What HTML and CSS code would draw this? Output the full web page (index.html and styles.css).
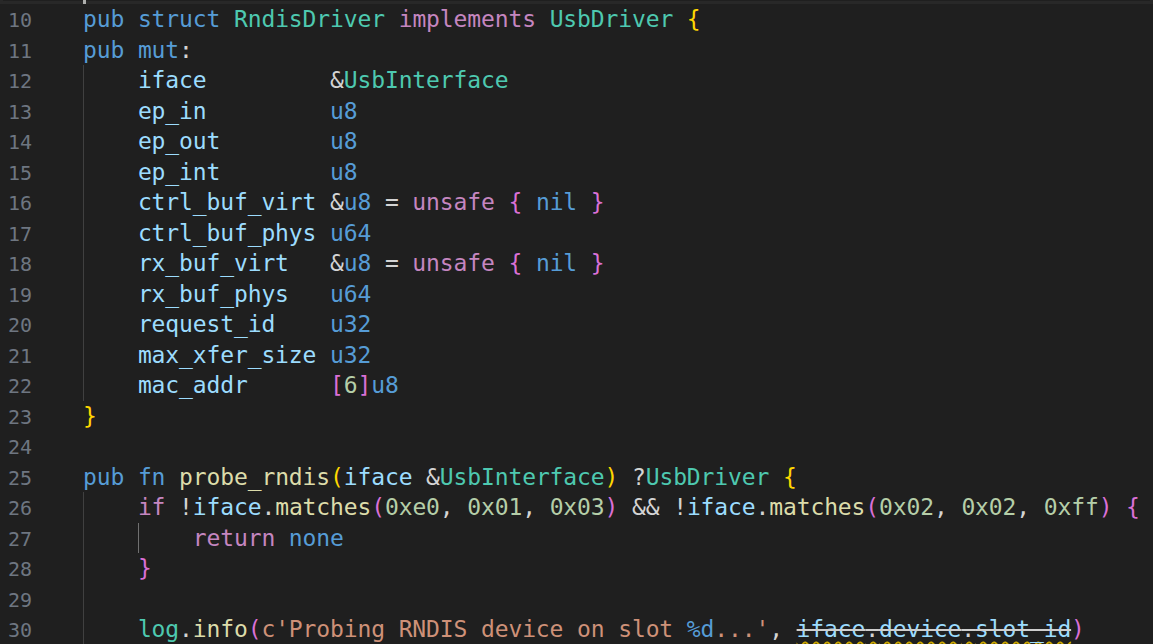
FILE: index.html
```html
<!DOCTYPE html>
<html lang="en">
<head>
<meta charset="utf-8">
<title>RNDIS driver</title>
<link rel="stylesheet" href="styles.css">
</head>
<body>
<div class="editor">
  <div class="line current"><span class="ln"></span><span class="code"><span class="cursor"></span></span></div>
  <div class="line"><span class="ln">10</span><span class="code"><span class="k">pub struct</span> <span class="t">RndisDriver</span> <span class="c">implements</span> <span class="t">UsbDriver</span> <span class="b1">{</span></span></div>
  <div class="line"><span class="ln">11</span><span class="code"><span class="k">pub mut</span>:</span></div>
  <div class="line"><span class="ln">12</span><span class="code g0">    <span class="v">iface</span>         &amp;<span class="t">UsbInterface</span></span></div>
  <div class="line"><span class="ln">13</span><span class="code g0">    <span class="v">ep_in</span>         <span class="k">u8</span></span></div>
  <div class="line"><span class="ln">14</span><span class="code g0">    <span class="v">ep_out</span>        <span class="k">u8</span></span></div>
  <div class="line"><span class="ln">15</span><span class="code g0">    <span class="v">ep_int</span>        <span class="k">u8</span></span></div>
  <div class="line"><span class="ln">16</span><span class="code g0">    <span class="v">ctrl_buf_virt</span> &amp;<span class="k">u8</span> = <span class="c">unsafe</span> <span class="b2">{</span> <span class="k">nil</span> <span class="b2">}</span></span></div>
  <div class="line"><span class="ln">17</span><span class="code g0">    <span class="v">ctrl_buf_phys</span> <span class="k">u64</span></span></div>
  <div class="line"><span class="ln">18</span><span class="code g0">    <span class="v">rx_buf_virt</span>   &amp;<span class="k">u8</span> = <span class="c">unsafe</span> <span class="b2">{</span> <span class="k">nil</span> <span class="b2">}</span></span></div>
  <div class="line"><span class="ln">19</span><span class="code g0">    <span class="v">rx_buf_phys</span>   <span class="k">u64</span></span></div>
  <div class="line"><span class="ln">20</span><span class="code g0">    <span class="v">request_id</span>    <span class="k">u32</span></span></div>
  <div class="line"><span class="ln">21</span><span class="code g0">    <span class="v">max_xfer_size</span> <span class="k">u32</span></span></div>
  <div class="line"><span class="ln">22</span><span class="code g0">    <span class="v">mac_addr</span>      <span class="b2">[</span><span class="n">6</span><span class="b2">]</span><span class="k">u8</span></span></div>
  <div class="line"><span class="ln">23</span><span class="code"><span class="b1">}</span></span></div>
  <div class="line"><span class="ln">24</span><span class="code"></span></div>
  <div class="line"><span class="ln">25</span><span class="code"><span class="k">pub fn</span> <span class="f">probe_rndis</span><span class="b1">(</span><span class="v">iface</span> &amp;<span class="t">UsbInterface</span><span class="b1">)</span> ?<span class="t">UsbDriver</span> <span class="b1">{</span></span></div>
  <div class="line"><span class="ln">26</span><span class="code g0">    <span class="c">if</span> !<span class="v">iface</span>.<span class="f">matches</span><span class="b2">(</span><span class="n">0xe0</span>, <span class="n">0x01</span>, <span class="n">0x03</span><span class="b2">)</span> &amp;&amp; !<span class="v">iface</span>.<span class="f">matches</span><span class="b2">(</span><span class="n">0x02</span>, <span class="n">0x02</span>, <span class="n">0xff</span><span class="b2">)</span> <span class="b2">{</span></span></div>
  <div class="line"><span class="ln">27</span><span class="code g0 g1">        <span class="c">return</span> <span class="k">none</span></span></div>
  <div class="line"><span class="ln">28</span><span class="code g0">    <span class="b2">}</span></span></div>
  <div class="line"><span class="ln">29</span><span class="code g0"></span></div>
  <div class="line"><span class="ln">30</span><span class="code g0">    <span class="t">log</span>.<span class="f">info</span><span class="b2">(</span><span class="s">c'Probing RNDIS device on slot <span class="k">%d</span>...'</span>, <span class="warn"><span class="dep"><span class="v">iface</span>.<span class="v">device</span>.<span class="v">slot_id</span></span></span><span class="b2">)</span></span></div>
</div>
</body>
</html>
```

FILE: styles.css
```css
html, body {
  margin: 0;
  padding: 0;
  background: #1f1f1f;
  height: 644px;
  overflow: hidden;
}

.editor {
  font-family: "DejaVu Sans Mono", "Liberation Mono", monospace;
  font-size: 23px;
  letter-spacing: -0.125px;
  line-height: 30.5px;
  color: #d4d4d4;
  margin-top: -26.3px;
}

.line {
  display: flex;
  height: 30.5px;
}

.line.current {
  box-shadow: inset 0 0 0 3px #282828;
}

.ln {
  flex: none;
  box-sizing: border-box;
  width: 83px;
  padding-right: 51px;
  padding-top: 1px;
  text-align: right;
  font-size: 20px;
  letter-spacing: 0;
  color: #6e7681;
}

.code {
  flex: 1;
  white-space: pre;
  background-repeat: no-repeat;
}

.cursor {
  display: inline-block;
  width: 3px;
  height: 30.5px;
  vertical-align: top;
  background: #aeafad;
}

.g0 {
  background-image: linear-gradient(#404040, #404040);
  background-size: 1px 100%;
  background-position: 0 0;
}

.g0.g1 {
  background-image: linear-gradient(#404040, #404040), linear-gradient(#707070, #707070);
  background-size: 1px 100%, 1px 100%;
  background-position: 0 0, 54.9px 0;
}

.k { color: #569cd6; }
.c { color: #c586c0; }
.t { color: #4ec9b0; }
.v { color: #9cdcfe; }
.f { color: #dcdcaa; }
.n { color: #b5cea8; }
.s { color: #ce9178; }
.b1 { color: #ffd700; }
.b2 { color: #da70d6; }
.b3 { color: #179fff; }

.warn {
  text-decoration: underline wavy #cca700;
  text-decoration-thickness: 1.5px;
  text-underline-offset: 4px;
}

.dep {
  text-decoration: line-through #cfcfcf;
  text-decoration-thickness: 2px;
}
```
